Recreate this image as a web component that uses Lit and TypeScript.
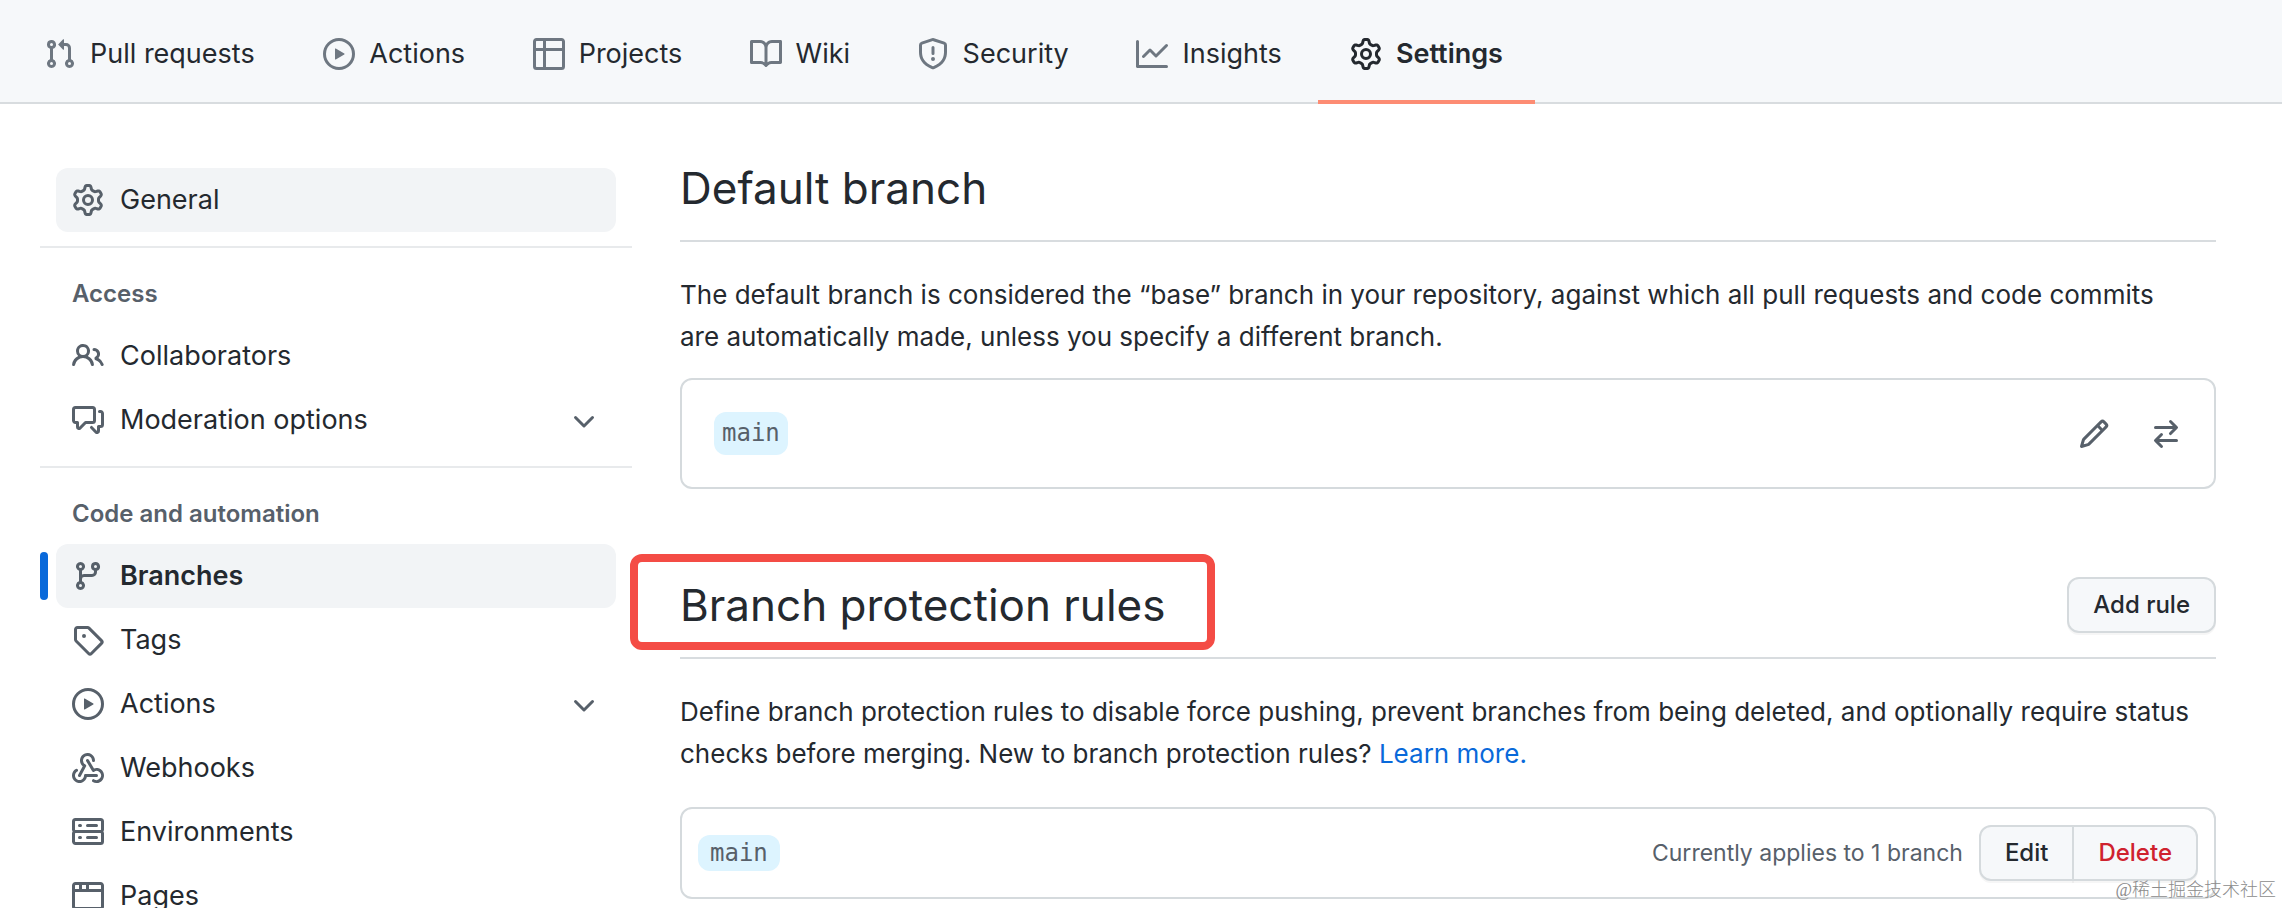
import { LitElement, html, css, svg, nothing } from "lit";
import { customElement, property } from "lit/decorators.js";

const ICONS: Record<string, string> = {
  pullRequest:
    "M7.177 3.073L9.573.677A.25.25 0 0110 .854v4.792a.25.25 0 01-.427.177L7.177 3.427a.25.25 0 010-.354zM3.75 2.5a.75.75 0 100 1.5.75.75 0 000-1.5zm-2.25.75a2.25 2.25 0 113 2.122v5.256a2.251 2.251 0 11-1.5 0V5.372A2.25 2.25 0 011.5 3.25zM11 2.5h-1V4h1a1 1 0 011 1v5.628a2.251 2.251 0 101.5 0V5A2.5 2.5 0 0011 2.5zm1 10.25a.75.75 0 111.5 0 .75.75 0 01-1.5 0zM3.75 12a.75.75 0 100 1.5.75.75 0 000-1.5z",
  play: "M1.5 8a6.5 6.5 0 1113 0 6.5 6.5 0 01-13 0zM8 0a8 8 0 100 16A8 8 0 008 0zM6.379 5.227A.25.25 0 006 5.442v5.117a.25.25 0 00.379.214l4.264-2.559a.25.25 0 000-.428L6.379 5.227z",
  table:
    "M0 1.75C0 .784.784 0 1.75 0h12.5C15.216 0 16 .784 16 1.75v12.5A1.75 1.75 0 0114.25 16H1.75A1.75 1.75 0 010 14.25V1.75zM1.5 6.5v7.75c0 .138.112.25.25.25H5v-8H1.5zM5 5H1.5V1.75a.25.25 0 01.25-.25H5V5zm1.5 1.5v8h7.75a.25.25 0 00.25-.25V6.5h-8zm8-1.5h-8V1.5h7.75a.25.25 0 01.25.25V5z",
  book: "M0 1.75A.75.75 0 01.75 1h4.253c1.227 0 2.317.59 3 1.501A3.744 3.744 0 0111.006 1h4.245a.75.75 0 01.75.75v10.5a.75.75 0 01-.75.75h-4.507a2.25 2.25 0 00-1.591.659l-.622.621a.75.75 0 01-1.06 0l-.622-.621A2.25 2.25 0 005.258 13H.75a.75.75 0 01-.75-.75V1.75zm8.755 3a2.25 2.25 0 012.25-2.25H14.5v9h-3.757c-.71 0-1.4.201-1.992.572l.004-7.322zm-1.504 7.324l.004-5.073-.002-2.253A2.25 2.25 0 005.003 2.5H1.5v9h3.757a3.75 3.75 0 011.994.574z",
  shield:
    "M7.467.133a1.75 1.75 0 011.066 0l5.25 1.68A1.75 1.75 0 0115 3.48V7c0 1.566-.32 3.182-1.303 4.682-.983 1.498-2.585 2.813-5.032 3.855a1.7 1.7 0 01-1.33 0c-2.447-1.042-4.049-2.357-5.032-3.855C1.32 10.182 1 8.566 1 7V3.48a1.75 1.75 0 011.217-1.667l5.25-1.68zm.61 1.429a.25.25 0 00-.153 0l-5.25 1.68a.25.25 0 00-.174.238V7c0 1.358.275 2.666 1.057 3.86.784 1.194 2.121 2.34 4.366 3.297a.2.2 0 00.154 0c2.245-.956 3.582-2.104 4.366-3.298C13.225 9.666 13.5 8.36 13.5 7V3.48a.25.25 0 00-.174-.237l-5.25-1.68zM9 10.5a1 1 0 11-2 0 1 1 0 012 0zm-.25-5.75a.75.75 0 10-1.5 0v3a.75.75 0 001.5 0v-3z",
  graph:
    "M1.5 1.75a.75.75 0 00-1.5 0v12.5c0 .414.336.75.75.75h14.5a.75.75 0 000-1.5H1.5V1.75zm14.28 2.53a.75.75 0 00-1.06-1.06L10 7.94 7.53 5.47a.75.75 0 00-1.06 0L3.22 8.72a.75.75 0 001.06 1.06L7 7.06l2.47 2.47a.75.75 0 001.06 0l5.25-5.25z",
  gear: "M8 0a8.2 8.2 0 0 1 .701.031C9.444.095 9.99.645 10.16 1.29l.288 1.107c.018.066.079.158.212.224.231.114.454.243.668.386.123.082.233.09.299.071l1.103-.303c.644-.176 1.392.021 1.82.63.27.385.506.792.704 1.218.315.675.111 1.422-.364 1.891l-.814.806c-.049.048-.098.147-.088.294.016.257.016.515 0 .772-.01.147.038.246.088.294l.814.806c.475.469.679 1.216.364 1.891a7.977 7.977 0 0 1-.704 1.217c-.428.61-1.176.807-1.82.63l-1.102-.302c-.067-.019-.177-.011-.3.071a5.909 5.909 0 0 1-.668.386c-.133.066-.194.158-.211.224l-.29 1.106c-.168.646-.715 1.196-1.458 1.26a8.006 8.006 0 0 1-1.402 0c-.743-.064-1.289-.614-1.458-1.26l-.289-1.106c-.018-.066-.079-.158-.212-.224a5.738 5.738 0 0 1-.668-.386c-.123-.082-.233-.09-.299-.071l-1.103.303c-.644.176-1.392-.021-1.82-.63a8.12 8.12 0 0 1-.704-1.218c-.315-.675-.111-1.422.363-1.891l.815-.806c.05-.048.098-.147.088-.294a6.214 6.214 0 0 1 0-.772c.01-.147-.038-.246-.088-.294l-.815-.806C.635 6.045.431 5.298.746 4.623a7.92 7.92 0 0 1 .704-1.217c.428-.61 1.176-.807 1.82-.63l1.102.302c.067.019.177.011.3-.071.214-.143.437-.272.668-.386.133-.066.194-.158.211-.224l.29-1.106C6.009.645 6.556.095 7.299.03 7.53.01 7.764 0 8 0Zm-.571 1.525c-.036.003-.108.036-.137.146l-.289 1.105c-.147.561-.549.967-.998 1.189-.173.086-.34.183-.5.29-.417.278-.97.423-1.529.27l-1.103-.303c-.109-.03-.175.016-.195.045-.22.312-.412.644-.573.99-.014.031-.021.11.059.19l.815.806c.411.406.562.957.53 1.456a4.709 4.709 0 0 0 0 .582c.032.499-.119 1.05-.53 1.456l-.815.806c-.081.08-.073.159-.059.19.162.346.353.677.573.989.02.03.085.076.195.046l1.102-.303c.56-.153 1.113-.008 1.53.27.161.107.328.204.501.29.447.222.85.629.997 1.189l.289 1.105c.029.109.101.143.137.146a6.6 6.6 0 0 0 1.142 0c.036-.003.108-.036.137-.146l.289-1.105c.147-.561.549-.967.998-1.189.173-.086.34-.183.5-.29.417-.278.97-.423 1.529-.27l1.103.303c.109.029.175-.016.195-.045.22-.313.411-.644.573-.99.014-.031.021-.11-.059-.19l-.815-.806c-.411-.406-.562-.957-.53-1.456a4.709 4.709 0 0 0 0-.582c-.032-.499.119-1.05.53-1.456l.815-.806c.081-.08.073-.159.059-.19a6.464 6.464 0 0 0-.573-.989c-.02-.03-.085-.076-.195-.046l-1.102.303c-.56.153-1.113.008-1.53-.27a4.44 4.44 0 0 0-.501-.29c-.447-.222-.85-.629-.997-1.189l-.289-1.105c-.029-.11-.101-.143-.137-.146a6.6 6.6 0 0 0-1.142 0ZM11 8a3 3 0 1 1-6 0 3 3 0 0 1 6 0ZM9.5 8a1.5 1.5 0 1 0-3.001.001A1.5 1.5 0 0 0 9.5 8Z",
  people:
    "M5.5 3.5a2 2 0 100 4 2 2 0 000-4zM2 5.5a3.5 3.5 0 115.898 2.549 5.507 5.507 0 013.034 4.084.75.75 0 11-1.482.235 4.001 4.001 0 00-7.9 0 .75.75 0 01-1.482-.236A5.507 5.507 0 013.102 8.05 3.49 3.49 0 012 5.5zM11 4a.75.75 0 100 1.5 1.5 1.5 0 01.666 2.844.75.75 0 00-.416.672v.352a.75.75 0 00.574.73c1.2.289 2.162 1.2 2.522 2.372a.75.75 0 101.434-.44 5.01 5.01 0 00-2.56-3.012A3 3 0 0011 4z",
  discussion:
    "M1.5 2.75a.25.25 0 01.25-.25h8.5a.25.25 0 01.25.25v5.5a.25.25 0 01-.25.25h-3.5a.75.75 0 00-.53.22L3.5 11.44V9.25a.75.75 0 00-.75-.75h-1a.25.25 0 01-.25-.25v-5.5zM1.75 1A1.75 1.75 0 000 2.75v5.5C0 9.216.784 10 1.75 10H2v1.543a1.457 1.457 0 002.487 1.03L7.061 10h3.189A1.75 1.75 0 0012 8.25v-5.5A1.75 1.75 0 0010.25 1h-8.5zM14.5 4.75a.25.25 0 00-.25-.25h-.5a.75.75 0 110-1.5h.5c.966 0 1.75.784 1.75 1.75v5.5A1.75 1.75 0 0114.25 12H14v1.543a1.457 1.457 0 01-2.487 1.03L9.22 12.28a.75.75 0 111.06-1.06l2.22 2.22v-2.19a.75.75 0 01.75-.75h1a.25.25 0 00.25-.25v-5.5z",
  branch:
    "M11.75 2.5a.75.75 0 100 1.5.75.75 0 000-1.5zm-2.25.75a2.25 2.25 0 113 2.122V6A2.5 2.5 0 0110 8.5H6a1 1 0 00-1 1v1.128a2.251 2.251 0 11-1.5 0V5.372a2.25 2.25 0 111.5 0v1.836A2.492 2.492 0 016 7h4a1 1 0 001-1v-.628A2.25 2.25 0 019.5 3.25zM4.25 12a.75.75 0 100 1.5.75.75 0 000-1.5zM3.5 3.25a.75.75 0 111.5 0 .75.75 0 01-1.5 0z",
  tag: "M1 7.775V2.75C1 1.784 1.784 1 2.75 1h5.025c.464 0 .91.184 1.238.513l6.25 6.25a1.75 1.75 0 0 1 0 2.474l-5.026 5.026a1.75 1.75 0 0 1-2.474 0l-6.25-6.25A1.752 1.752 0 0 1 1 7.775Zm1.5 0c0 .066.026.13.073.177l6.25 6.25a.25.25 0 0 0 .354 0l5.025-5.025a.25.25 0 0 0 0-.354l-6.25-6.25a.25.25 0 0 0-.177-.073H2.75a.25.25 0 0 0-.25.25ZM6 5a1 1 0 1 1 0 2 1 1 0 0 1 0-2Z",
  webhook:
    "M5.5 4.25a2.25 2.25 0 014.5 0 .75.75 0 001.5 0 3.75 3.75 0 10-6.14 2.889l-2.272 4.258a.75.75 0 001.324.706L7 7.25a.75.75 0 00-.309-1.015A2.25 2.25 0 015.5 4.25zM7.364 3.607a.75.75 0 011.03.257l2.608 4.349a3.75 3.75 0 11-.628 6.785.75.75 0 01.752-1.299 2.25 2.25 0 10-.033-3.88.75.75 0 01-1.03-.256L7.107 4.636a.75.75 0 01.257-1.03zM2.9 8.776A.75.75 0 012.625 9.8 2.25 2.25 0 106 11.75a.75.75 0 01.75-.751h5.5a.75.75 0 010 1.5H7.425a3.751 3.751 0 11-5.55-3.998.75.75 0 011.024.274z",
  server:
    "M1.75 1A1.75 1.75 0 000 2.75v4c0 .372.116.717.314 1a1.742 1.742 0 00-.314 1v4c0 .966.784 1.75 1.75 1.75h12.5A1.75 1.75 0 0016 12.75v-4c0-.372-.116-.717-.314-1 .198-.283.314-.628.314-1v-4A1.75 1.75 0 0014.25 1H1.75zm0 7.5a.25.25 0 00-.25.25v4c0 .138.112.25.25.25h12.5a.25.25 0 00.25-.25v-4a.25.25 0 00-.25-.25H1.75zM1.5 2.75a.25.25 0 01.25-.25h12.5a.25.25 0 01.25.25v4a.25.25 0 01-.25.25H1.75a.25.25 0 01-.25-.25v-4zm5.5 2A.75.75 0 017.75 4h4.5a.75.75 0 010 1.5h-4.5A.75.75 0 017 4.75zM7.75 10a.75.75 0 000 1.5h4.5a.75.75 0 000-1.5h-4.5zM3 4.75A.75.75 0 013.75 4h.5a.75.75 0 010 1.5h-.5A.75.75 0 013 4.75zM3.75 10a.75.75 0 000 1.5h.5a.75.75 0 000-1.5h-.5z",
  browser:
    "M0 2.75C0 1.784.784 1 1.75 1h12.5c.966 0 1.75.784 1.75 1.75v10.5A1.75 1.75 0 0114.25 15H1.75A1.75 1.75 0 010 13.25V2.75zm1.75-.25a.25.25 0 00-.25.25V4.5h2v-2H1.75zM5 2.5v2h2v-2H5zm3.5 0v2h6V2.75a.25.25 0 00-.25-.25H8.5zm6 3.5h-13v7.25c0 .138.112.25.25.25h12.5a.25.25 0 00.25-.25V6z",
  chevron:
    "M12.78 6.22a.75.75 0 010 1.06l-4.25 4.25a.75.75 0 01-1.06 0L3.22 7.28a.75.75 0 011.06-1.06L8 9.94l3.72-3.72a.75.75 0 011.06 0z",
  pencil:
    "M11.013 1.427a1.75 1.75 0 012.474 0l1.086 1.086a1.75 1.75 0 010 2.474l-8.61 8.61c-.21.21-.47.364-.756.445l-3.251.93a.75.75 0 01-.927-.928l.929-3.25a1.75 1.75 0 01.445-.758l8.61-8.61zm1.414 1.06a.25.25 0 00-.354 0L10.811 3.75l1.439 1.44 1.263-1.263a.25.25 0 000-.354l-1.086-1.086zM11.189 6.25L9.75 4.81l-6.286 6.287a.25.25 0 00-.064.108l-.558 1.953 1.953-.558a.249.249 0 00.108-.064l6.286-6.286z",
  swap: "M5.22 14.78a.75.75 0 001.06-1.06L4.56 12h8.69a.75.75 0 000-1.5H4.56l1.72-1.72a.75.75 0 00-1.06-1.06l-3 3a.75.75 0 000 1.06l3 3zm5.56-6.5a.75.75 0 11-1.06-1.06l1.72-1.72H2.75a.75.75 0 010-1.5h8.69L9.72 2.28a.75.75 0 011.06-1.06l3 3a.75.75 0 010 1.06l-3 3z",
};

interface NavItem {
  icon: string;
  label: string;
  kind?: "highlighted" | "current";
  expandable?: boolean;
}

@customElement("gh-icon")
export class GhIcon extends LitElement {
  @property() name = "";

  static styles = css`
    :host {
      display: block;
      flex: none;
      width: 32px;
      height: 32px;
    }
    .glyph {
      display: block;
      width: 100%;
      height: 100%;
      fill: currentColor;
    }
  `;

  render() {
    return html`<svg class="glyph" viewBox="0 0 16 16" aria-hidden="true">
      ${svg`<path fill-rule="evenodd" d=${ICONS[this.name] ?? ""}></path>`}
    </svg>`;
  }
}

@customElement("repo-tabs")
export class RepoTabs extends LitElement {
  static styles = css`
    :host {
      display: block;
      background: #f6f8fa;
      border-bottom: 2px solid #d8dcdf;
      padding: 6px 12px 0;
    }
    .tabs {
      display: flex;
      margin-bottom: -2px;
    }
    .tab {
      display: flex;
      align-items: center;
      gap: 14px;
      padding: 24px 32px 22px;
      border-bottom: 4px solid transparent;
      color: #24292f;
      font-size: 27px;
      line-height: 48px;
      text-decoration: none;
      white-space: nowrap;
    }
    .tab gh-icon {
      color: #6e7781;
    }
    .label::after {
      content: attr(data-label);
      display: block;
      height: 0;
      overflow: hidden;
      visibility: hidden;
      font-weight: 600;
    }
    .active {
      border-color: #fd8c73;
      font-weight: 600;
    }
    .tab.active gh-icon {
      color: inherit;
    }
  `;

  private tabs: NavItem[] = [
    { icon: "pullRequest", label: "Pull requests" },
    { icon: "play", label: "Actions" },
    { icon: "table", label: "Projects" },
    { icon: "book", label: "Wiki" },
    { icon: "shield", label: "Security" },
    { icon: "graph", label: "Insights" },
    { icon: "gear", label: "Settings", kind: "current" },
  ];

  render() {
    return html`<nav class="tabs" aria-label="Repository">
      ${this.tabs.map(
        (t) => html`<a
          class="tab ${t.kind ? "active" : ""}"
          href="#"
          aria-current=${t.kind ? "page" : nothing}
          ><gh-icon name=${t.icon}></gh-icon
          ><span class="label" data-label=${t.label}>${t.label}</span></a
        >`,
      )}
    </nav>`;
  }
}

@customElement("settings-menu")
export class SettingsMenu extends LitElement {
  static styles = css`
    :host {
      display: block;
    }
    .list {
      list-style: none;
      margin: 0;
      padding: 0 16px;
    }
    .group {
      margin-top: 14px;
      border-top: 2px solid #e8eaec;
    }
    .title {
      margin: 0;
      padding: 26px 32px 10px;
      color: #57606a;
      font-size: 24px;
      font-weight: 600;
      line-height: 40px;
    }
    .entry {
      position: relative;
    }
    .link {
      display: flex;
      align-items: center;
      gap: 16px;
      box-sizing: border-box;
      width: 100%;
      padding: 12px 16px;
      border: 0;
      border-radius: 12px;
      background: none;
      color: #24292f;
      font: inherit;
      line-height: 40px;
      text-align: left;
      text-decoration: none;
    }
    .link gh-icon {
      color: #57606a;
    }
    .label {
      flex: 1;
    }
    .highlighted,
    .current {
      background: #f2f4f6;
    }
    .current {
      font-weight: 600;
    }
    .marker {
      position: absolute;
      top: 8px;
      bottom: 8px;
      left: -16px;
      width: 8px;
      border-radius: 6px;
      background: #0969da;
    }
  `;

  private groups: { title?: string; items: NavItem[] }[] = [
    { items: [{ icon: "gear", label: "General", kind: "highlighted" }] },
    {
      title: "Access",
      items: [
        { icon: "people", label: "Collaborators" },
        { icon: "discussion", label: "Moderation options", expandable: true },
      ],
    },
    {
      title: "Code and automation",
      items: [
        { icon: "branch", label: "Branches", kind: "current" },
        { icon: "tag", label: "Tags" },
        { icon: "play", label: "Actions", expandable: true },
        { icon: "webhook", label: "Webhooks" },
        { icon: "server", label: "Environments" },
        { icon: "browser", label: "Pages" },
      ],
    },
  ];

  private entry(item: NavItem) {
    const content = html`<gh-icon name=${item.icon}></gh-icon
      ><span class="label">${item.label}</span>`;
    return html`<li class="entry">
      ${item.kind === "current" ? html`<span class="marker"></span>` : nothing}
      ${item.expandable
        ? html`<button class="link" type="button" aria-expanded="false">
            ${content}<gh-icon name="chevron"></gh-icon>
          </button>`
        : html`<a
            class="link ${item.kind ?? ""}"
            href="#"
            aria-current=${item.kind === "current" ? "page" : nothing}
            >${content}</a
          >`}
    </li>`;
  }

  render() {
    return html`<nav aria-label="Settings">
      ${this.groups.map((g) =>
        g.title
          ? html`<div class="group">
              <h3 class="title">${g.title}</h3>
              <ul class="list">
                ${g.items.map((i) => this.entry(i))}
              </ul>
            </div>`
          : html`<ul class="list">
              ${g.items.map((i) => this.entry(i))}
            </ul>`,
      )}
    </nav>`;
  }
}

@customElement("app-root")
export class AppRoot extends LitElement {
  static styles = css`
    :host {
      display: block;
      position: relative;
      height: 100vh;
      overflow: hidden;
      background: #fff;
      color: #24292f;
      font-family: Inter, "Liberation Sans", sans-serif;
      font-size: 27px;
      line-height: 42px;
    }
    .layout {
      display: grid;
      grid-template-columns: 592px minmax(0, 1fr);
      column-gap: 48px;
      padding: 0 66px 0 40px;
    }
    .side {
      padding-top: 64px;
    }
    .main {
      display: flex;
      flex-direction: column;
      gap: 80px;
      padding-top: 48px;
    }
    .head {
      display: flex;
      align-items: center;
      justify-content: space-between;
      padding-bottom: 16px;
      border-bottom: 2px solid #d8dcdf;
    }
    .heading {
      margin: 0;
      font-size: 44px;
      font-weight: 400;
      line-height: 72px;
    }
    .marked {
      position: relative;
    }
    .marked::after {
      content: "";
      position: absolute;
      inset: -15px -50px -9px -50px;
      border: 8px solid #f44c45;
      border-radius: 12px;
    }
    .text {
      margin: 32px 0 20px;
      padding-right: 24px;
      font-size: 26px;
    }
    .text.wide {
      margin-bottom: 32px;
    }
    .more {
      color: #0969da;
      text-decoration: none;
    }
    .box {
      display: flex;
      align-items: center;
      border: 2px solid #d5dadd;
      border-radius: 12px;
      padding: 32px;
    }
    .box.compact {
      padding: 16px;
    }
    .branch {
      margin-right: auto;
      padding: 0 8px;
      border-radius: 12px;
      background: #ddf4ff;
      color: #57606a;
      font-family: "DejaVu Sans Mono", "Liberation Mono", monospace;
      font-size: 24px;
      line-height: 43px;
    }
    .compact .branch {
      padding: 0 12px;
      line-height: 36px;
    }
    .tools {
      display: flex;
      gap: 40px;
    }
    .tool {
      padding: 0;
      border: 0;
      background: none;
      color: #57606a;
    }
    .btn {
      box-sizing: border-box;
      padding: 6px 24px;
      border: 2px solid #d5dadd;
      border-radius: 12px;
      background: #f6f8fa;
      box-shadow: 0 2px 0 rgba(27, 31, 36, 0.04);
      color: #24292f;
      font-family: inherit;
      font-size: 24px;
      font-weight: 500;
      line-height: 40px;
    }
    .pair {
      display: flex;
    }
    .pair .btn:first-child {
      border-radius: 12px 0 0 12px;
    }
    .pair .btn:last-child {
      margin-left: -2px;
      border-radius: 0 12px 12px 0;
    }
    .btn.danger {
      color: #cf222e;
    }
    .note {
      margin-right: 16px;
      color: #57606a;
      font-size: 23px;
    }
    .credit {
      position: absolute;
      right: 6px;
      bottom: 6px;
      color: #8c8c8c;
      font-family: "Liberation Serif", "Noto Sans CJK SC", serif;
      font-size: 18px;
      font-weight: 300;
      line-height: 24px;
    }
  `;

  render() {
    return html`
      <repo-tabs></repo-tabs>
      <div class="layout">
        <settings-menu class="side"></settings-menu>
        <main class="main">
          <section>
            <div class="head"><h2 class="heading">Default branch</h2></div>
            <p class="text">
              The default branch is considered the “base” branch in your
              repository, against which all pull requests and code commits are
              automatically made, unless you specify a different branch.
            </p>
            <div class="box">
              <span class="branch">main</span>
              <div class="tools">
                <button class="tool" type="button" aria-label="Rename branch">
                  <gh-icon name="pencil"></gh-icon>
                </button>
                <button class="tool" type="button" aria-label="Switch branch">
                  <gh-icon name="swap"></gh-icon>
                </button>
              </div>
            </div>
          </section>
          <section>
            <div class="head">
              <h2 class="heading marked">Branch protection rules</h2>
              <button class="btn" type="button">Add rule</button>
            </div>
            <p class="text wide">
              Define branch protection rules to disable force pushing, prevent
              branches from being deleted, and optionally require status checks
              before merging. New to branch protection rules?
              <a class="more" href="#">Learn more.</a>
            </p>
            <div class="box compact">
              <span class="branch">main</span>
              <span class="note">Currently applies to 1 branch</span>
              <div class="pair">
                <button class="btn" type="button">Edit</button>
                <button class="btn danger" type="button">Delete</button>
              </div>
            </div>
          </section>
        </main>
      </div>
      <div class="credit">@稀土掘金技术社区</div>
    `;
  }
}
